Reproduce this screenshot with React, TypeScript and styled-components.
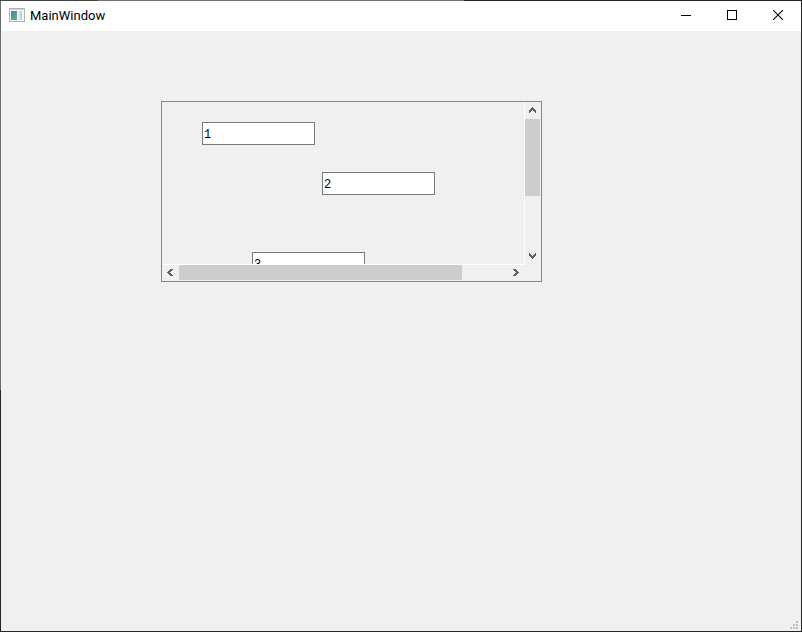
import React, { useRef, useState } from "react";
import styled, { createGlobalStyle } from "styled-components";

const GlobalStyle = createGlobalStyle`
  *, *::before, *::after { box-sizing: border-box; }
  body { margin: 0; background: #f0f0f0; }
`;

const Window = styled.main`
  display: flex;
  flex-direction: column;
  min-height: 100vh;
  border: 1px solid transparent;
  background:
    linear-gradient(#f0f0f0, #f0f0f0) padding-box,
    linear-gradient(90deg, #444 98px, #707070 98px 464px, #262628 464px) 0 0 / 100% 1px no-repeat border-box,
    linear-gradient(#6b6b6b 390px, #262628 390px) 0 0 / 1px 100% no-repeat border-box,
    linear-gradient(#262628, #262628) border-box;
`;

const TitleBar = styled.header`
  display: flex;
  align-items: center;
  height: 30px;
  padding-left: 8px;
  background: #fff;
`;

const Title = styled.h1`
  flex: 1;
  margin: 0 0 0 5px;
  font: 400 13px/20px Roboto, "Open Sans", sans-serif;
  color: #000;
`;

const CaptionButton = styled.button`
  display: grid;
  place-items: center;
  width: 46px;
  height: 30px;
  padding: 0 0 2px;
  border: 0;
  background: transparent;
  &:hover { background: #e5e5e5; }
`;

const Client = styled.section`
  display: flex;
  flex: 1;
  align-items: flex-start;
  padding: 70px 160px;
`;

const ScrollFrame = styled.div`
  display: grid;
  grid-template: 163px 16px / 363px 16px;
  border: 1px solid #828790;
`;

const Viewport = styled.div`
  overflow: auto;
  scrollbar-width: none;
  border-right: 1px solid #fff;
  border-bottom: 1px solid #fff;
`;

const Canvas = styled.div`
  display: flex;
  flex-direction: column;
  width: 420px;
  height: 270px;
  padding-top: 20px;
`;

const LineEdit = styled.input<{ $left: number; $gap: number }>`
  flex: none;
  width: 113px;
  height: 23px;
  margin: ${(p) => p.$gap}px 0 0 ${(p) => p.$left}px;
  padding: 2px 1px 0;
  border: 1px solid #7a7a7a;
  border-radius: 0;
  outline: 0;
  background: #fff;
  color: #000;
  font: 12px/18px "Liberation Mono", monospace;
  &:focus-visible { border-color: #0078d7; }
`;

const ScrollBar = styled.div<{ $vertical?: boolean }>`
  display: flex;
  flex-direction: ${(p) => (p.$vertical ? "column" : "row")};
  padding: 0 1px 1px 0;
  background: #f0f0f0;
`;

const StepButton = styled.button<{ $vertical?: boolean }>`
  display: grid;
  place-items: center;
  flex: none;
  width: ${(p) => (p.$vertical ? 15 : 17)}px;
  height: ${(p) => (p.$vertical ? 17 : 15)}px;
  padding: 0;
  border: 0;
  background: transparent;
  &:hover { background: #dadada; }
`;

const Track = styled.div<{ $vertical?: boolean }>`
  display: flex;
  flex-direction: ${(p) => (p.$vertical ? "column" : "row")};
  flex: 1;
`;

const Thumb = styled.div<{ $vertical?: boolean }>`
  flex: none;
  width: ${(p) => (p.$vertical ? 15 : 283)}px;
  height: ${(p) => (p.$vertical ? 77 : 15)}px;
  background: #cdcdcd;
`;

const StatusBar = styled.footer`
  display: flex;
  justify-content: flex-end;
  padding: 0 3px 2px 0;
`;

const Icon = styled.svg`
  display: block;
`;

function AppIcon() {
  return (
    <Icon width="16" height="16" viewBox="0 0 16 16" aria-hidden="true">
      <defs>
        <linearGradient id="pane" x1="0" y1="0" x2="1" y2="1">
          <stop offset="0" stopColor="#4a7fb0" />
          <stop offset="1" stopColor="#5cb583" />
        </linearGradient>
      </defs>
      <rect x="0.5" y="0.5" width="15" height="13" fill="#f7f8f8" stroke="#b0b3b5" />
      <rect x="1" y="1" width="14" height="1" fill="#cfd3d5" />
      <rect x="2" y="3" width="6" height="9" fill="url(#pane)" />
      <rect x="9" y="3" width="2" height="9" fill="#dfe8ea" />
      <rect x="11" y="3" width="2" height="9" fill="#c5d5d6" />
    </Icon>
  );
}

const turns = { up: 0, right: 90, down: 180, left: 270 };

function Chevron({ to }: { to: keyof typeof turns }) {
  return (
    <Icon width="9" height="9" viewBox="0 0 9 9" shapeRendering="crispEdges" aria-hidden="true">
      <path
        transform={`rotate(${turns[to]} 4.5 4.5)`}
        fill="#606060"
        d="M4 1h1v1h1v1h1v1h1v3h-1v-1h-1v-1h-1v-1h-1v1h-1v1h-1v1h-1v-3h1v-1h1v-1h1z"
      />
    </Icon>
  );
}

const fields = [
  { value: "1", left: 40, gap: 0 },
  { value: "2", left: 160, gap: 27 },
  { value: "3", left: 90, gap: 57 },
];

export default function App() {
  const view = useRef<HTMLDivElement>(null);
  const [pos, setPos] = useState({ x: 0, y: 0 });
  const step = (left: number, top: number) => view.current?.scrollBy({ left, top });
  const onScroll = () => {
    const v = view.current;
    if (!v) return;
    setPos({
      x: v.scrollLeft / Math.max(1, v.scrollWidth - v.clientWidth),
      y: v.scrollTop / Math.max(1, v.scrollHeight - v.clientHeight),
    });
  };

  return (
    <>
      <GlobalStyle />
      <Window>
        <TitleBar>
          <AppIcon />
          <Title>MainWindow</Title>
          <CaptionButton aria-label="Minimize">
            <Icon width="10" height="10" shapeRendering="crispEdges">
              <path d="M0 5h10v1h-10z" />
            </Icon>
          </CaptionButton>
          <CaptionButton aria-label="Maximize">
            <Icon width="10" height="10" shapeRendering="crispEdges">
              <path d="M.5 .5h9v9h-9z" fill="none" stroke="#000" />
            </Icon>
          </CaptionButton>
          <CaptionButton aria-label="Close">
            <Icon width="10" height="10">
              <path d="M0 0L10 10M10 0L0 10" stroke="#000" strokeWidth="1.1" />
            </Icon>
          </CaptionButton>
        </TitleBar>
        <Client>
          <ScrollFrame>
            <Viewport ref={view} onScroll={onScroll}>
              <Canvas>
                {fields.map((f) => (
                  <LineEdit
                    key={f.value}
                    aria-label={`Field ${f.value}`}
                    defaultValue={f.value}
                    $left={f.left}
                    $gap={f.gap}
                  />
                ))}
              </Canvas>
            </Viewport>
            <ScrollBar $vertical>
              <StepButton $vertical aria-label="Scroll up" onClick={() => step(0, -20)}>
                <Chevron to="up" />
              </StepButton>
              <Track $vertical>
                <Thumb $vertical style={{ marginTop: pos.y * 51 }} />
              </Track>
              <StepButton $vertical aria-label="Scroll down" onClick={() => step(0, 20)}>
                <Chevron to="down" />
              </StepButton>
            </ScrollBar>
            <ScrollBar>
              <StepButton aria-label="Scroll left" onClick={() => step(-20, 0)}>
                <Chevron to="left" />
              </StepButton>
              <Track>
                <Thumb style={{ marginLeft: pos.x * 45 }} />
              </Track>
              <StepButton aria-label="Scroll right" onClick={() => step(20, 0)}>
                <Chevron to="right" />
              </StepButton>
            </ScrollBar>
          </ScrollFrame>
        </Client>
        <StatusBar>
          <Icon width="8" height="8" shapeRendering="crispEdges" aria-hidden="true">
            <path
              fill="#bfbfbf"
              d="M6 0h2v2h-2zM3 3h2v2h-2zM6 3h2v2h-2zM0 6h2v2h-2zM3 6h2v2h-2zM6 6h2v2h-2z"
            />
          </Icon>
        </StatusBar>
      </Window>
    </>
  );
}
